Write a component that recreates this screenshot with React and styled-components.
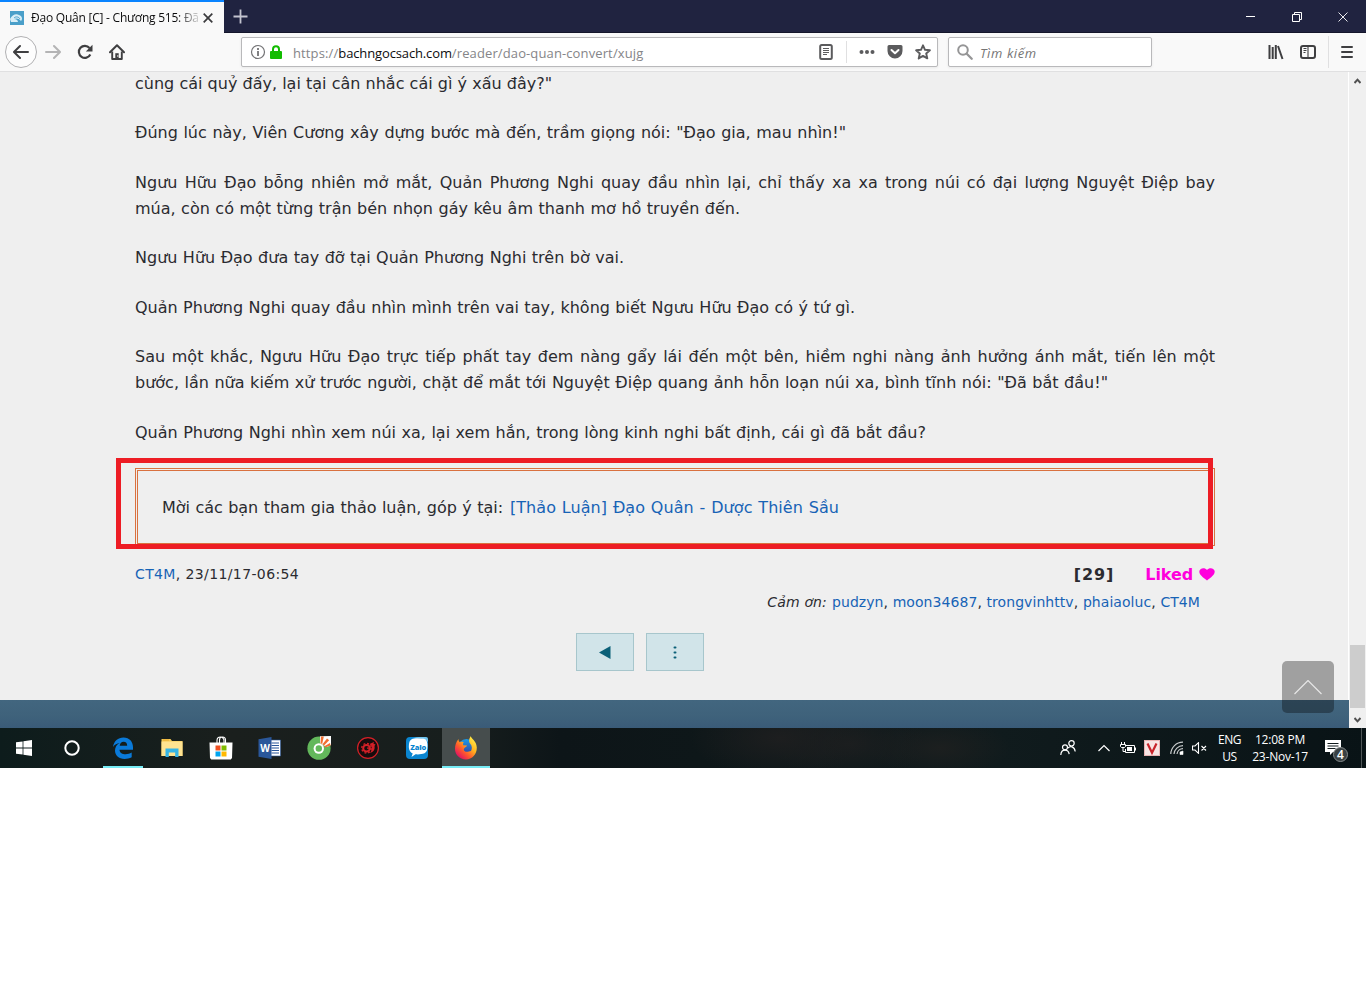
import React from "react";
import styled, { createGlobalStyle } from "styled-components";

const GlobalStyle = createGlobalStyle`
  * {
    box-sizing: border-box;
  }
  body {
    margin: 0;
    background: #fff;
  }
`;

const ui = `"Open Sans", "Noto Sans", sans-serif`;
const reader = `"DejaVu Sans", sans-serif`;

const Desktop = styled.div`
  display: flex;
  flex-direction: column;
  width: 1366px;
  height: 768px;
  overflow: hidden;
  font-family: ${ui};
`;

/* ---------- browser chrome ---------- */

const TabBar = styled.div`
  display: flex;
  height: 33px;
  background: #202340;
  border-bottom: 1px solid #14162b;
`;
const Tab = styled.div`
  display: flex;
  align-items: center;
  width: 224px;
  height: 33px;
  padding: 0 9px 0 10px;
  border-top: 2px solid #0a84ff;
  background: #f9f9f9;
`;
const TabTitle = styled.div`
  width: 167px;
  margin: 0 5px 0 7px;
  white-space: nowrap;
  font-size: 12px;
  letter-spacing: -0.23px;
  line-height: 18px;
  color: #0c0c0d;
  mask-image: linear-gradient(to right, #000 145px, transparent 172px);
`;
const NewTab = styled.div`
  display: flex;
  align-items: center;
  padding: 0 9px;
`;
const WindowButtons = styled.div`
  display: flex;
  margin-left: auto;
`;
const WindowButton = styled.div`
  display: flex;
  align-items: center;
  justify-content: center;
  width: 46px;
  height: 33px;
`;

const NavBar = styled.div`
  display: flex;
  align-items: center;
  height: 39px;
  padding: 0 3px 0 5px;
  background: #f9f9f9;
  border-bottom: 1px solid #e0e0e1;
`;
const BackButton = styled.div`
  display: flex;
  align-items: center;
  justify-content: center;
  width: 32px;
  height: 32px;
  border: 1px solid #b1b1b3;
  border-radius: 50%;
  background: #fdfdfd;
`;
const NavButton = styled.div`
  display: flex;
  align-items: center;
  justify-content: center;
  width: 32px;
  height: 32px;
`;
const Field = styled.div`
  display: flex;
  align-items: center;
  width: ${(props) => props.$width}px;
  height: 30px;
  margin-left: ${(props) => props.$gap}px;
  border: 1px solid #b9b9bb;
  border-radius: 2px;
  background: #fff;
  box-shadow: 0 1px 3px rgba(0, 0, 0, 0.07);
`;
const Url = styled.div`
  flex: 1;
  margin-left: 11px;
  padding-top: 2px;
  font-size: 13px;
  letter-spacing: 0.12px;
  white-space: nowrap;
  color: #858588;
  b {
    font-weight: 400;
    letter-spacing: -0.13px;
    color: #0c0c0d;
  }
`;
const Divider = styled.div`
  width: 1px;
  height: ${(props) => props.$height}px;
  background: #e0e0e1;
`;
const SearchHint = styled.div`
  margin-left: 7px;
  padding-top: 2px;
  font-size: 13px;
  font-style: italic;
  letter-spacing: 0.6px;
  color: #757575;
`;
const NavRight = styled.div`
  display: flex;
  align-items: center;
  margin-left: auto;
`;

/* ---------- page ---------- */

const Viewport = styled.div`
  display: flex;
  height: 656px;
  background: #efefef;
`;
const Page = styled.div`
  position: relative;
  display: flex;
  flex-direction: column;
  width: 1349px;
  height: 656px;
  overflow: hidden;
`;
const Article = styled.div`
  flex: 1;
  width: 1080px;
  margin: -1.2px 0 0 135px;
  font-family: ${reader};
  font-size: 16px;
  color: #2b2b30;
`;
const Paragraph = styled.div`
  margin-bottom: 24px;
`;
const Line = styled.div`
  width: ${(props) => props.$width}px;
  line-height: 25.6px;
  letter-spacing: ${(props) => props.$spacing || 0}px;
  white-space: nowrap;
  text-align: justify;
  text-align-last: justify;
`;
const Link = styled.span`
  color: #1763b6;
`;
const Notice = styled.div`
  position: relative;
  display: flex;
  align-items: center;
  gap: 7px;
  height: 78px;
  margin-top: -0.8px;
  padding-left: 24px;
  border: 3px double #d9713f;
`;
const Marker = styled.div`
  position: absolute;
  top: -13px;
  left: -22px;
  width: 1097px;
  height: 91px;
  border: 5px solid #ed1c24;
`;
const Meta = styled.div`
  display: flex;
  align-items: center;
  height: 28px;
  margin-top: 14px;
  font-size: 14px;
`;
const MetaText = styled.div`
  width: ${(props) => props.$width}px;
  white-space: nowrap;
  letter-spacing: ${(props) => props.$spacing || 0}px;
  text-align-last: justify;
`;
const Likes = styled.div`
  display: flex;
  align-items: center;
  margin-left: auto;
  font-size: 16px;
  font-weight: 700;
  letter-spacing: 0.9px;
`;
const Liked = styled.span`
  margin: 0 6px 0 31px;
  letter-spacing: -0.1px;
  color: #ff00dc;
`;
const Thanks = styled.div`
  display: flex;
  justify-content: flex-end;
  gap: 5px;
  padding-right: 15px;
  font-size: 14px;
  line-height: 28px;
`;
const ThanksLabel = styled.i`
  letter-spacing: 0.15px;
`;
const Pager = styled.div`
  display: flex;
  justify-content: center;
  gap: 12px;
  margin-top: 17px;
  padding-right: 70px;
`;
const PagerButton = styled.div`
  display: flex;
  align-items: center;
  justify-content: center;
  width: 58px;
  height: 38px;
  border: 1px solid #a7c6cc;
  background: #d1e4e9;
`;
const PageFooter = styled.div`
  flex: none;
  height: 28px;
  background: linear-gradient(#42667f, #3f627b 55%, #3a5b78);
`;
const ToTop = styled.div`
  position: absolute;
  right: 15px;
  bottom: 15px;
  display: flex;
  align-items: center;
  justify-content: center;
  width: 52px;
  height: 52px;
  border-radius: 5px;
  background: rgba(0, 0, 0, 0.33);
`;
const ScrollBar = styled.div`
  display: flex;
  flex-direction: column;
  align-items: center;
  width: 17px;
  padding-right: 1px;
  background: #f0f0f0;
  box-shadow: -1px 0 #fff;
`;
const ScrollArrow = styled.div`
  display: flex;
  align-items: center;
  justify-content: center;
  height: ${(props) => props.$height}px;
  padding-top: ${(props) => props.$offset || 0}px;
`;
const ScrollThumb = styled.div`
  width: 15px;
  height: 63px;
  margin-top: auto;
  background: #cdcdcd;
`;

/* ---------- taskbar ---------- */

const TaskBar = styled.div`
  display: flex;
  height: 40px;
  background:
    radial-gradient(ellipse 90px 40px at 780px 10px, #1d1e1f, transparent),
    radial-gradient(ellipse 80px 35px at 850px 16px, #1b1e1f, transparent),
    radial-gradient(ellipse 70px 30px at 940px 20px, #1c1f1f, transparent),
    linear-gradient(to right, #0d1c1c, #1a1f1d 230px, #171e1d 460px, #0d1518 560px, #0e1719 700px, #101b1d 1000px, #091316 1366px);
`;
const Task = styled.div`
  display: flex;
  align-items: center;
  justify-content: center;
  width: 48px;
  height: 40px;
  margin-left: ${(props) => props.$gap || 0}px;
  background: ${(props) => (props.$active ? "#464d4d" : "transparent")};
  box-shadow: ${(props) => (props.$active ? "inset 0 -2px #76ecf5" : "none")};
`;
const RunningTask = styled(Task)`
  width: 40px;
  margin: 0 4px 0 7px;
  box-shadow: inset 0 -2px #76ecf5;
`;
const Tray = styled.div`
  display: flex;
  align-items: center;
  margin-left: auto;
`;
const TrayIcon = styled.div`
  display: flex;
  align-items: center;
  justify-content: center;
  width: ${(props) => props.$width || 24}px;
`;
const TrayText = styled.div`
  width: ${(props) => props.$width}px;
  font-size: 12px;
  line-height: 17px;
  letter-spacing: ${(props) => props.$spacing}px;
  text-align: center;
  white-space: nowrap;
  color: #fff;
`;
const ShowDesktop = styled.div`
  width: 5px;
  height: 40px;
  border-left: 1px solid #4f5657;
`;

const Icon = ({ size = 16, w, h, children, ...rest }) => (
  <svg width={w || size} height={h || size} viewBox={`0 0 ${w || size} ${h || size}`} fill="none" {...rest}>
    {children}
  </svg>
);

const paragraphs = [
  [[417, 'cùng cái quỷ đấy, lại tại cân nhắc cái gì ý xấu đây?"']],
  [[711, 'Đúng lúc này, Viên Cương xây dựng bước mà đến, trầm giọng nói: "Đạo gia, mau nhìn!"']],
  [
    [1080, "Ngưu Hữu Đạo bỗng nhiên mở mắt, Quản Phương Nghi quay đầu nhìn lại, chỉ thấy xa xa trong núi có đại lượng Nguyệt Điệp bay"],
    [605, "múa, còn có một từng trận bén nhọn gáy kêu âm thanh mơ hồ truyền đến."],
  ],
  [[489, "Ngưu Hữu Đạo đưa tay đỡ tại Quản Phương Nghi trên bờ vai."]],
  [[720, "Quản Phương Nghi quay đầu nhìn mình trên vai tay, không biết Ngưu Hữu Đạo có ý tứ gì."]],
  [
    [1080, "Sau một khắc, Ngưu Hữu Đạo trực tiếp phất tay đem nàng gẩy lái đến một bên, hiềm nghi nàng ảnh hưởng ánh mắt, tiến lên một"],
    [973, 'bước, lần nữa kiếm xử trước người, chặt để mắt tới Nguyệt Điệp quang ảnh hỗn loạn núi xa, bình tĩnh nói: "Đã bắt đầu!"'],
  ],
  [[791, "Quản Phương Nghi nhìn xem núi xa, lại xem hắn, trong lòng kinh nghi bất định, cái gì đã bắt đầu?"]],
];

const fans = ["pudzyn", "moon34687", "trongvinhttv", "phaiaoluc", "CT4M"];

function Tabs() {
  return (
    <TabBar>
      <Tab>
        <Icon size={14}>
          <rect width="14" height="14" fill="#4a9fc9" />
          <path d="M0 8c2-4 6-6 9-4 3 1 4 4 2 6-2-3-5-3-7-2 2 0 4 1 4 3H1z" fill="#d8eef7" />
          <path d="M4 7c2-2 5-1 6 1" stroke="#4a9fc9" />
        </Icon>
        <TabTitle>Đạo Quân [C] - Chương 515: Đã</TabTitle>
        <Icon size={10} stroke="#3b3b3d" strokeWidth="1.7">
          <path d="M.7.7l8.6 8.6M9.3.7L.7 9.3" />
        </Icon>
      </Tab>
      <NewTab>
        <Icon size={15} stroke="#c3c4cf" strokeWidth="1.8">
          <path d="M7.500.5v14M.5 7.500h14" />
        </Icon>
      </NewTab>
      <WindowButtons>
        <WindowButton>
          <Icon size={10} stroke="#fff">
            <path d="M0 4.500h9" />
          </Icon>
        </WindowButton>
        <WindowButton>
          <Icon size={10} stroke="#fff">
            <path d="M.5 2.500h7v7h-7zM2.500 2.500v-2h7v7h-2" />
          </Icon>
        </WindowButton>
        <WindowButton>
          <Icon size={10} stroke="#fff" strokeWidth="0.9">
            <path d="M.5.5l9 9M9.500.5l-9 9" />
          </Icon>
        </WindowButton>
      </WindowButtons>
    </TabBar>
  );
}

function Navigation() {
  return (
    <NavBar>
      <BackButton>
        <Icon stroke="#3f3f41" strokeWidth="2" strokeLinecap="round" strokeLinejoin="round">
          <path d="M15 8H1.500M7 2L1 8l6 6" />
        </Icon>
      </BackButton>
      <NavButton>
        <Icon stroke="#b4b4b5" strokeWidth="2" strokeLinecap="round" strokeLinejoin="round">
          <path d="M1 8h13.500M9 2l6 6-6 6" />
        </Icon>
      </NavButton>
      <NavButton>
        <Icon>
          <path d="M13.300 10.500a6 6 0 1 1-.8-6.500" stroke="#3f3f41" strokeWidth="2.200" />
          <path d="M15.500.8v6.700H8.800z" fill="#3f3f41" />
        </Icon>
      </NavButton>
      <NavButton>
        <Icon>
          <path d="M1 8.300L8 1.300l7 7" stroke="#3f3f41" strokeWidth="2" strokeLinecap="round" strokeLinejoin="round" />
          <path d="M3.200 7.500V15h9.600V7.500" stroke="#3f3f41" strokeWidth="1.900" strokeLinejoin="round" />
          <path d="M6.300 15V9.200h3.400V15z" fill="#3f3f41" />
          <circle cx="8.800" cy="12" r=".7" fill="#fff" />
        </Icon>
      </NavButton>
      <Field $width={697} $gap={108}>
        <Icon size={16} style={{ marginLeft: 8 }}>
          <circle cx="8" cy="8" r="6.500" stroke="#737375" strokeWidth="1.200" />
          <path d="M8 7v5M8 4v1.900" stroke="#737375" strokeWidth="1.800" />
        </Icon>
        <Icon w={12} h={14} style={{ marginLeft: 4 }}>
          <path d="M3 7V4.300a3 3 0 0 1 6 0V7" stroke="#12bc00" strokeWidth="2" />
          <rect y="6" width="12" height="8" rx="1" fill="#12bc00" />
        </Icon>
        <Url>
          https://<b>bachngocsach.com</b>/reader/dao-quan-convert/xujg
        </Url>
        <Icon style={{ marginRight: 12 }}>
          <rect x="2.200" y="1" width="11.600" height="14" rx="1.500" stroke="#5b5b5d" strokeWidth="2" />
          <path d="M5 4.500h6M5 6.500h6M5 8.500h6M5 10.500h4" stroke="#5b5b5d" />
        </Icon>
        <Divider $height={22} />
        <Icon style={{ marginLeft: 12 }}>
          <circle cx="2.500" cy="8" r="2" fill="#5b5b5d" />
          <circle cx="8" cy="8" r="2" fill="#5b5b5d" />
          <circle cx="13.500" cy="8" r="2" fill="#5b5b5d" />
        </Icon>
        <Icon style={{ marginLeft: 12 }}>
          <path d="M2 1h12a1.500 1.500 0 0 1 1.500 1.500V7a7.500 7.500 0 0 1-15 0V2.500A1.500 1.500 0 0 1 2 1z" fill="#5b5b5d" />
          <path d="M4.500 6L8 9.300 11.500 6" stroke="#fff" strokeWidth="2" strokeLinecap="round" strokeLinejoin="round" />
        </Icon>
        <Icon style={{ margin: "0 6px 0 12px" }}>
          <path
            d="M8 1.300l2 4.500 4.900.5-3.700 3.200 1.100 4.900L8 11.900l-4.300 2.500 1.100-4.900L1.100 6.300 6 5.800z"
            stroke="#5b5b5d"
            strokeWidth="1.900"
            strokeLinejoin="round"
          />
        </Icon>
      </Field>
      <Field $width={204} $gap={10}>
        <Icon style={{ marginLeft: 8 }} stroke="#959596">
          <circle cx="6" cy="6" r="4.800" strokeWidth="2" />
          <path d="M9.700 9.700l5 5" strokeWidth="2.300" strokeLinecap="round" />
        </Icon>
        <SearchHint>Tìm kiếm</SearchHint>
      </Field>
      <NavRight>
        <NavButton>
          <Icon stroke="#3f3f41" strokeWidth="2">
            <path d="M1.500 1v14M4.700 3v12M7.800 1v14M10 2l4.500 13" />
          </Icon>
        </NavButton>
        <NavButton>
          <Icon stroke="#3f3f41">
            <rect x="1" y="2" width="14" height="12" rx="2" strokeWidth="2" />
            <path d="M8 2v12M3.500 4.500h3M3.500 6.500h3M3.500 8.500h2" strokeWidth="1.100" />
          </Icon>
        </NavButton>
        <NavButton style={{ width: 4 }} />
        <Divider $height={32} />
        <NavButton style={{ marginLeft: 2 }}>
          <Icon stroke="#3f3f41" strokeWidth="2" strokeLinecap="round">
            <path d="M3 3h10M3 8h10M3 13h10" />
          </Icon>
        </NavButton>
      </NavRight>
    </NavBar>
  );
}

function Chapter() {
  return (
    <Page>
      <Article>
        {paragraphs.map((lines, i) => (
          <Paragraph key={i}>
            {lines.map(([width, text]) => (
              <Line key={text} $width={width}>
                {text}
              </Line>
            ))}
          </Paragraph>
        ))}
        <Notice>
          <Line $width={341} $spacing={-0.05}>
            Mời các bạn tham gia thảo luận, góp ý tại:
          </Line>
          <Line $width={329} $spacing={0.05}>
            <Link>[Thảo Luận] Đạo Quân - Dược Thiên Sầu</Link>
          </Line>
          <Marker />
        </Notice>
        <Meta>
          <MetaText $width={164} $spacing={0.38}>
            <Link>CT4M</Link>, 23/11/17-06:54
          </MetaText>
          <Likes>
            [29]
            <Liked>Liked</Liked>
            <Icon w={16} h={14}>
              <path d="M8 13.500C4 10.500.3 8 .3 4.600.3.800 6 0 8 3c2-3 7.700-2.200 7.700 1.600C15.700 8 12 10.500 8 13.500z" fill="#ff00dc" />
            </Icon>
          </Likes>
        </Meta>
        <Thanks>
          <ThanksLabel>Cảm ơn:</ThanksLabel>
          <MetaText $width={368} $spacing={0.06}>
            {fans.map((name, i) => (
              <React.Fragment key={name}>
                {i > 0 && ", "}
                <Link>{name}</Link>
              </React.Fragment>
            ))}
          </MetaText>
        </Thanks>
        <Pager>
          <PagerButton>
            <Icon w={12} h={13}>
              <path d="M0 6.500L11.500 0v13z" fill="#0b6078" />
            </Icon>
          </PagerButton>
          <PagerButton>
            <Icon w={4} h={13}>
              <rect x=".5" y=".5" width="3" height="2" rx="1" fill="#0b6078" />
              <rect x=".5" y="5.500" width="3" height="2" rx="1" fill="#0b6078" />
              <rect x=".5" y="10.500" width="3" height="2" rx="1" fill="#0b6078" />
            </Icon>
          </PagerButton>
        </Pager>
      </Article>
      <PageFooter />
      <ToTop>
        <Icon w={28} h={15} stroke="#e6e6e6" strokeWidth="1.200">
          <path d="M.5 14L14 .5 27.500 14" />
        </Icon>
      </ToTop>
    </Page>
  );
}

function Taskbar() {
  return (
    <TaskBar>
      <Task>
        <Icon>
          <path d="M0 2.300L6.600 1.400v6.200H0zM7.400 1.300L16 0v7.600H7.400zM0 8.400h6.600v6.200L0 13.700zM7.400 8.400H16V16l-8.600-1.200z" fill="#fff" />
        </Icon>
      </Task>
      <Task>
        <Icon>
          <circle cx="8" cy="8" r="6.700" stroke="#fff" strokeWidth="2" />
        </Icon>
      </Task>
      <RunningTask>
        <Icon w={22} h={22}>
          <path
            d="M1 10C2 4 6 .5 11.500.5c6 0 9.500 4.300 9.500 9.800v2.400H7.500c.2 3.300 3 4.600 6 4.600 2.300 0 4.300-.6 6.200-1.700v4.600c-2.200 1.200-4.600 1.700-7.100 1.700C6.700 21.900 3 18.400 3 13.600 3 10.200 4.800 7.500 7.700 6 5 6.300 2.700 7.500 1 10zm6.700-1.300h7.500c0-2.400-1.300-3.900-3.600-3.900-2.100 0-3.600 1.600-3.900 3.900z"
            fill="#0a7ad9"
          />
        </Icon>
      </RunningTask>
      <Task $gap={1}>
        <Icon w={22} h={20}>
          <path d="M.5 1h9l1.500 2h10.500v15H.5z" fill="#f5c955" />
          <path d="M.5 3.500h21V18H.5z" fill="#ffe391" />
          <path d="M2 1.500h6v1H2z" fill="#e9a82e" />
          <path d="M4.500 10.500h13V19h-3.300v-4.500H7.800V19H4.500z" fill="#36b4e5" />
        </Icon>
      </Task>
      <Task $gap={1}>
        <Icon w={24} h={24}>
          <path d="M8 7V4.500a3.500 3.500 0 0 1 7 0V7M10.500 7V4a3 3 0 0 1 6 0v3" stroke="#fff" strokeWidth="1.100" />
          <path d="M.5 6.500h23L23 22l-1.200 1.500H2.200L1 22z" fill="#fff" />
          <path d="M6.500 9.500h5v5h-5z" fill="#f05022" />
          <path d="M12.500 9.500h5v5h-5z" fill="#7fba00" />
          <path d="M6.500 15.500h5v5h-5z" fill="#00a4ef" />
          <path d="M12.500 15.500h5v5h-5z" fill="#ffb900" />
        </Icon>
      </Task>
      <Task $gap={1}>
        <Icon w={23} h={22} style={{ marginRight: 2 }}>
          <path d="M12 3h10.500v16H12z" fill="#fff" stroke="#2a579a" strokeWidth=".6" />
          <path d="M13.500 6h7.500M13.500 8.500h7.500M13.500 11h7.500M13.500 13.500h7.500M13.500 16h7.500" stroke="#2a579a" />
          <path d="M.5 2.300L13.500 0v22L.5 19.700z" fill="#2a579a" />
          <text x="7" y="14.800" textAnchor="middle" fontFamily="Open Sans" fontSize="10" fontWeight="700" fill="#fff">
            W
          </text>
        </Icon>
      </Task>
      <Task $gap={1}>
        <Icon w={24} h={24}>
          <circle cx="12" cy="12.200" r="11.600" fill="#63b85b" />
          <path d="M13 .3L24 0v9l-4 2-4-2-3-2z" fill="#fff" />
          <path d="M14 .6h2.800L15.200 8l-1.700-.8z" fill="#f36f31" />
          <path d="M20 2.500l2.200 1.700-5.200 5.300-1.500-1.300z" fill="#f36f31" />
          <path d="M23 7l.6 2.500-5.600 2-.7-1.300z" fill="#f36f31" />
          <circle cx="11.800" cy="12.500" r="5.200" fill="#fff" />
          <circle cx="11.800" cy="12.500" r="3.200" fill="#63b85b" />
        </Icon>
      </Task>
      <Task $gap={1}>
        <Icon w={24} h={24}>
          <circle cx="12" cy="12" r="10.400" fill="#170c0d" stroke="#d42027" strokeWidth="1.200" />
          <circle cx="10.500" cy="12.200" r="3.300" stroke="#d42027" strokeWidth="2" />
          <circle cx="10.500" cy="12.200" r="4.800" stroke="#d42027" strokeWidth="1.400" strokeDasharray="1.900 1.870" />
          <path d="M11 12.200h3v1.600" stroke="#d42027" strokeWidth="1.200" />
          <path d="M13.500 8l4.500-2-.5 2 2 .3-1 1.700c.7 3.500-1 6-4.500 7 1.500-2 2-4 1.500-7z" fill="#d42027" />
        </Icon>
      </Task>
      <Task $gap={1}>
        <Icon w={24} h={24}>
          <rect x="1" y="1" width="22" height="22" rx="4" fill="#0a85d0" />
          <path d="M8 1h13a2 2 0 0 1 2 2v3C20 2 12 2 8 1z" fill="#6fc3ee" />
          <path d="M6.500 21l1.200-3.500C4 15.500 3.500 12 4 8c.3-3.500 2-5 5-5.500 3-.4 7-.3 10 .3 2.500.7 3.500 3 3.500 6.700 0 4-.5 6.500-3 7.800-2.500 1-6 1.300-9 1z" fill="#fff" />
          <text x="13.200" y="13.500" textAnchor="middle" fontFamily="Open Sans" fontSize="7.500" fontWeight="800" fill="#0a85d0" letterSpacing="-.2">
            Zalo
          </text>
        </Icon>
      </Task>
      <Task $gap={1} $active>
        <Icon w={24} h={24}>
          <defs>
            <linearGradient id="fox" x1="0.900" y1="0.100" x2="0.200" y2="0.900">
              <stop offset="0" stopColor="#fff04a" />
              <stop offset=".4" stopColor="#ffb21e" />
              <stop offset=".7" stopColor="#ff5a2c" />
              <stop offset="1" stopColor="#e3175e" />
            </linearGradient>
            <linearGradient id="globe" x1="0" y1="0" x2="0" y2="1">
              <stop offset="0" stopColor="#1b9be8" />
              <stop offset="1" stopColor="#3b3191" />
            </linearGradient>
          </defs>
          <circle cx="12.500" cy="12" r="9" fill="url(#globe)" />
          <path
            d="M1 13C1 9 2 6 4.500 3c0 1.500.5 2.500 1.200 3.200C7 5.700 8.500 5.800 9.700 6.300 9 7.300 8.800 8.400 9.300 9.200l3.700.4c-.3 1.500-2.200 1.800-2.900 2.900-.5.800-.3 1.700.4 2.500 2 1.800 4.400.3 6.500 0 1.400-2.400 1-5.400-.8-7.200C14.500 6 14.700 2.800 16.800 0c-.1 2.500 5.700 4.500 6 11.500C23 18.500 18 23.400 12 23.400 5.500 23.400 1 18.600 1 13z"
            fill="url(#fox)"
          />
        </Icon>
      </Task>
      <Tray>
        <TrayIcon $width={48}>
          <Icon size={16} stroke="#fff" strokeWidth="1.200">
            <circle cx="5" cy="7.300" r="2.500" />
            <circle cx="11.500" cy="3.300" r="2.700" />
            <path d="M.8 15c.2-3.300 2-4.800 4.200-4.800s3.800 1.500 4.200 4M8 8c2-2.300 6.500-2 7.200 3.500" />
          </Icon>
        </TrayIcon>
        <TrayIcon>
          <Icon w={12} h={8} stroke="#fff" strokeWidth="1.200">
            <path d="M.5 7L6 1.500 11.500 7" />
          </Icon>
        </TrayIcon>
        <TrayIcon>
          <Icon w={16} h={12} stroke="#fff">
            <path d="M5.500 3.500h9v7h-9V7M15.500 5.500v3M1.500 0v2.500M4.500 0v2.500M.5 2.500h5v2l-1 1h-3l-1-1zM3 5.500v4h2" />
            <path d="M7 5h5v4H7z" fill="#fff" stroke="none" />
          </Icon>
        </TrayIcon>
        <TrayIcon>
          <Icon size={16}>
            <rect width="16" height="16" fill="#e9b3b3" />
            <rect x="1" y="1" width="14" height="14" fill="#f8e4e4" />
            <path d="M3.500 3.500L8 12.800l4.500-9.300" stroke="#c9242b" strokeWidth="2.200" />
          </Icon>
        </TrayIcon>
        <TrayIcon $width={26}>
          <Icon w={14} h={14} stroke="#c9cccd">
            <path d="M.8 13A12 12 0 0 1 13 1.200M4 13a9 9 0 0 1 9-8.300M7 13a6 6 0 0 1 6-5.300" strokeWidth="1.200" />
            <path d="M10 13.500V11l3-1v3.500z" fill="#fff" stroke="#fff" strokeWidth=".6" />
          </Icon>
        </TrayIcon>
        <TrayIcon $width={19}>
          <Icon w={15} h={12} stroke="#fff">
            <path d="M.5 4H3l3.500-3.300v10.600L3 8H.5zM9.500 4l4.500 4.500M14 4L9.500 8.500" strokeWidth="1.100" />
          </Icon>
        </TrayIcon>
        <TrayText $width={41} $spacing={-0.4}>
          ENG
          <br />
          US
        </TrayText>
        <TrayText $width={60} $spacing={-0.2}>
          12:08 PM
          <br />
          23-Nov-17
        </TrayText>
        <TrayIcon $width={51}>
          <Icon w={28} h={28}>
            <path d="M3 6h16v12h-8l-3 3v-3H3z" fill="#fff" />
            <path d="M5.500 9.500h11M5.500 12h11M5.500 14.500h8" stroke="#111b1e" />
            <circle cx="18.500" cy="20.500" r="7" fill="#3a4143" stroke="#858a8b" />
            <text x="18.500" y="25" textAnchor="middle" fontFamily="Open Sans" fontSize="12" fontWeight="600" fill="#fff">
              4
            </text>
          </Icon>
        </TrayIcon>
        <ShowDesktop />
      </Tray>
    </TaskBar>
  );
}

export default function App() {
  return (
    <>
      <GlobalStyle />
      <Desktop>
        <Tabs />
        <Navigation />
        <Viewport>
          <Chapter />
          <ScrollBar>
            <ScrollArrow $height={17}>
              <Icon w={7} h={6} stroke="#505050" strokeWidth="2">
                <path d="M.5 5l3-3.300 3 3.300" />
              </Icon>
            </ScrollArrow>
            <ScrollThumb />
            <ScrollArrow $height={20} $offset={4}>
              <Icon w={7} h={6} stroke="#505050" strokeWidth="2">
                <path d="M.5 1l3 3.300L6.500 1" />
              </Icon>
            </ScrollArrow>
          </ScrollBar>
        </Viewport>
        <Taskbar />
      </Desktop>
    </>
  );
}
